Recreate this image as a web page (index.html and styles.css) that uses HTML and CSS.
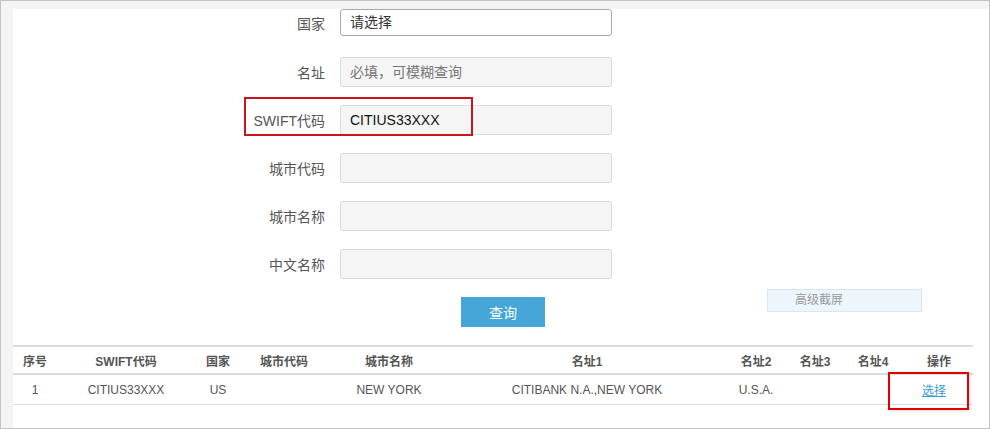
FILE: index.html
```html
<!DOCTYPE html>
<html lang="zh-CN">
<head>
    <meta charset="UTF-8">
    <title>SWIFT代码查询</title>
    <link rel="stylesheet" href="styles.css">
</head>
<body>
    <div class="panel">
        <div class="search-form">
            <div class="form-row row-first">
                <label class="form-label">国家</label>
                <div class="select-box">请选择</div>
            </div>
            <div class="form-row">
                <label class="form-label">名址</label>
                <input class="text-input" type="text" placeholder="必填，可模糊查询">
            </div>
            <div class="form-row">
                <label class="form-label">SWIFT代码</label>
                <input class="text-input" type="text" value="CITIUS33XXX">
            </div>
            <div class="form-row">
                <label class="form-label">城市代码</label>
                <input class="text-input" type="text">
            </div>
            <div class="form-row">
                <label class="form-label">城市名称</label>
                <input class="text-input" type="text">
            </div>
            <div class="form-row">
                <label class="form-label">中文名称</label>
                <input class="text-input" type="text">
            </div>
            <div class="form-actions">
                <button class="search-button">查询</button>
                <div class="advanced-box">高级截屏</div>
            </div>
        </div>

        <table class="result-table">
            <colgroup>
                <col class="col-no">
                <col class="col-swift">
                <col class="col-country">
                <col class="col-citycode">
                <col class="col-cityname">
                <col class="col-addr1">
                <col class="col-addr2">
                <col class="col-addr3">
                <col class="col-addr4">
                <col class="col-op">
            </colgroup>
            <thead>
                <tr>
                    <th>序号</th>
                    <th>SWIFT代码</th>
                    <th>国家</th>
                    <th>城市代码</th>
                    <th>城市名称</th>
                    <th>名址1</th>
                    <th>名址2</th>
                    <th>名址3</th>
                    <th>名址4</th>
                    <th>操作</th>
                </tr>
            </thead>
            <tbody>
                <tr>
                    <td>1</td>
                    <td>CITIUS33XXX</td>
                    <td>US</td>
                    <td></td>
                    <td>NEW YORK</td>
                    <td>CITIBANK N.A.,NEW YORK</td>
                    <td>U.S.A.</td>
                    <td></td>
                    <td></td>
                    <td class="op-cell"><a href="#" class="select-link">选择</a></td>
                </tr>
            </tbody>
        </table>

        <!-- 标注框 -->
        <div class="mark mark-swift"></div>
        <div class="mark mark-select"></div>
    </div>
</body>
</html>
```

FILE: styles.css
```css
html, body {
    height: 100%;
}

body {
    margin: 0;
    box-sizing: border-box;
    border: 1px solid #c4c4c4;
    background-color: #f4f4f4;
    font-family: 'Liberation Sans', 'Noto Sans CJK SC', sans-serif;
    color: #555;
    overflow: hidden;
}

.panel {
    position: relative;
    margin: 8px 0 0 12px;
    height: calc(100% - 8px);
    background-color: #fff;
}

/* 查询表单 */
.form-row {
    display: flex;
    align-items: center;
    margin-bottom: 18px;
}

.row-first {
    margin-bottom: 21px;
}

.form-label {
    width: 327px;
    box-sizing: border-box;
    padding-right: 15px;
    text-align: right;
    font-size: 14px;
    color: #555;
}

.select-box {
    width: 272px;
    height: 27px;
    box-sizing: border-box;
    border: 1px solid #a9a9a9;
    border-radius: 3px;
    padding-left: 9px;
    font-size: 14px;
    line-height: 25px;
    color: #333;
    background-color: #fff;
}

.text-input {
    width: 272px;
    height: 30px;
    box-sizing: border-box;
    border: 1px solid #dcdcdc;
    border-radius: 2px;
    padding: 0 9px;
    margin: 0;
    font-family: inherit;
    font-size: 14px;
    color: #111;
    background-color: #f5f5f5;
    outline: none;
}

.text-input::placeholder {
    color: #777;
}

.form-actions {
    display: flex;
    align-items: flex-start;
    margin-top: -8px;
}

.search-button {
    margin: 8px 0 0 448px;
    width: 84px;
    height: 30px;
    border: none;
    background-color: #45a6d7;
    color: #fff;
    font-family: inherit;
    font-size: 14px;
    cursor: pointer;
}

.advanced-box {
    margin-left: 222px;
    width: 155px;
    height: 23px;
    box-sizing: border-box;
    padding-left: 27px;
    border: 1px solid #d8e6f3;
    background-color: #eef6fd;
    font-size: 12px;
    line-height: 21px;
    color: #999;
}

/* 结果表格 */
.result-table {
    width: 960px;
    margin-top: 18px;
    border-collapse: collapse;
    table-layout: fixed;
    font-size: 12px;
    color: #555;
}

.col-no { width: 44px; }
.col-swift { width: 138px; }
.col-country { width: 46px; }
.col-citycode { width: 86px; }
.col-cityname { width: 124px; }
.col-addr1 { width: 272px; }
.col-addr2 { width: 66px; }
.col-addr3 { width: 52px; }
.col-addr4 { width: 64px; }
.col-op { width: 68px; }

.result-table th {
    height: 26px;
    padding: 0;
    font-weight: bold;
    text-align: center;
    border-top: 2px solid #d6dde3;
    border-bottom: 2px solid #d6dde3;
}

.result-table td {
    height: 29px;
    padding: 0;
    text-align: center;
    border-bottom: 1px solid #d6dde3;
}

.result-table .op-cell {
    padding-right: 10px;
}

.select-link {
    color: #3b9ad9;
    text-decoration: underline;
}

/* 标注框 */
.mark {
    position: absolute;
    box-sizing: border-box;
    border: 2px solid #c8161d;
}

.mark-swift {
    left: 231px;
    top: 88px;
    width: 229px;
    height: 39px;
}

.mark-select {
    left: 875px;
    top: 363px;
    width: 81px;
    height: 38px;
    border-color: #e30000;
    box-shadow: 1px 1px 3px rgba(0, 0, 0, 0.15);
}
```
